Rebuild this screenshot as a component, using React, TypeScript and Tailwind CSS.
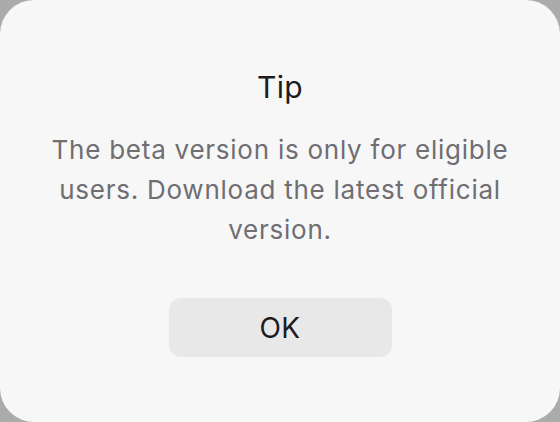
export default function App() {
  return (
    <main className="w-[560px] h-[422px] bg-[#ababab]" style={{ fontFamily: 'Inter, "Noto Sans", sans-serif' }}>
      <div className="flex h-full w-full flex-col items-center rounded-[34px] bg-[#f7f7f7] pt-[69px]">
        <h1 className="text-[30px] leading-[36px] tracking-[0.3px] text-[#1c1c1e]">Tip</h1>
        <p className="mt-[25px] w-[500px] text-center text-[26px] leading-[40px] tracking-[0.75px] text-[#6e6e73]">
          The beta version is only for eligible users. Download the latest official version.
        </p>
        <button className="mt-[48px] h-[59px] w-[223px] rounded-[12px] bg-[#e8e8e8] text-[28px] tracking-[0.5px] text-[#1c1c1e]">
          OK
        </button>
      </div>
    </main>
  )
}
